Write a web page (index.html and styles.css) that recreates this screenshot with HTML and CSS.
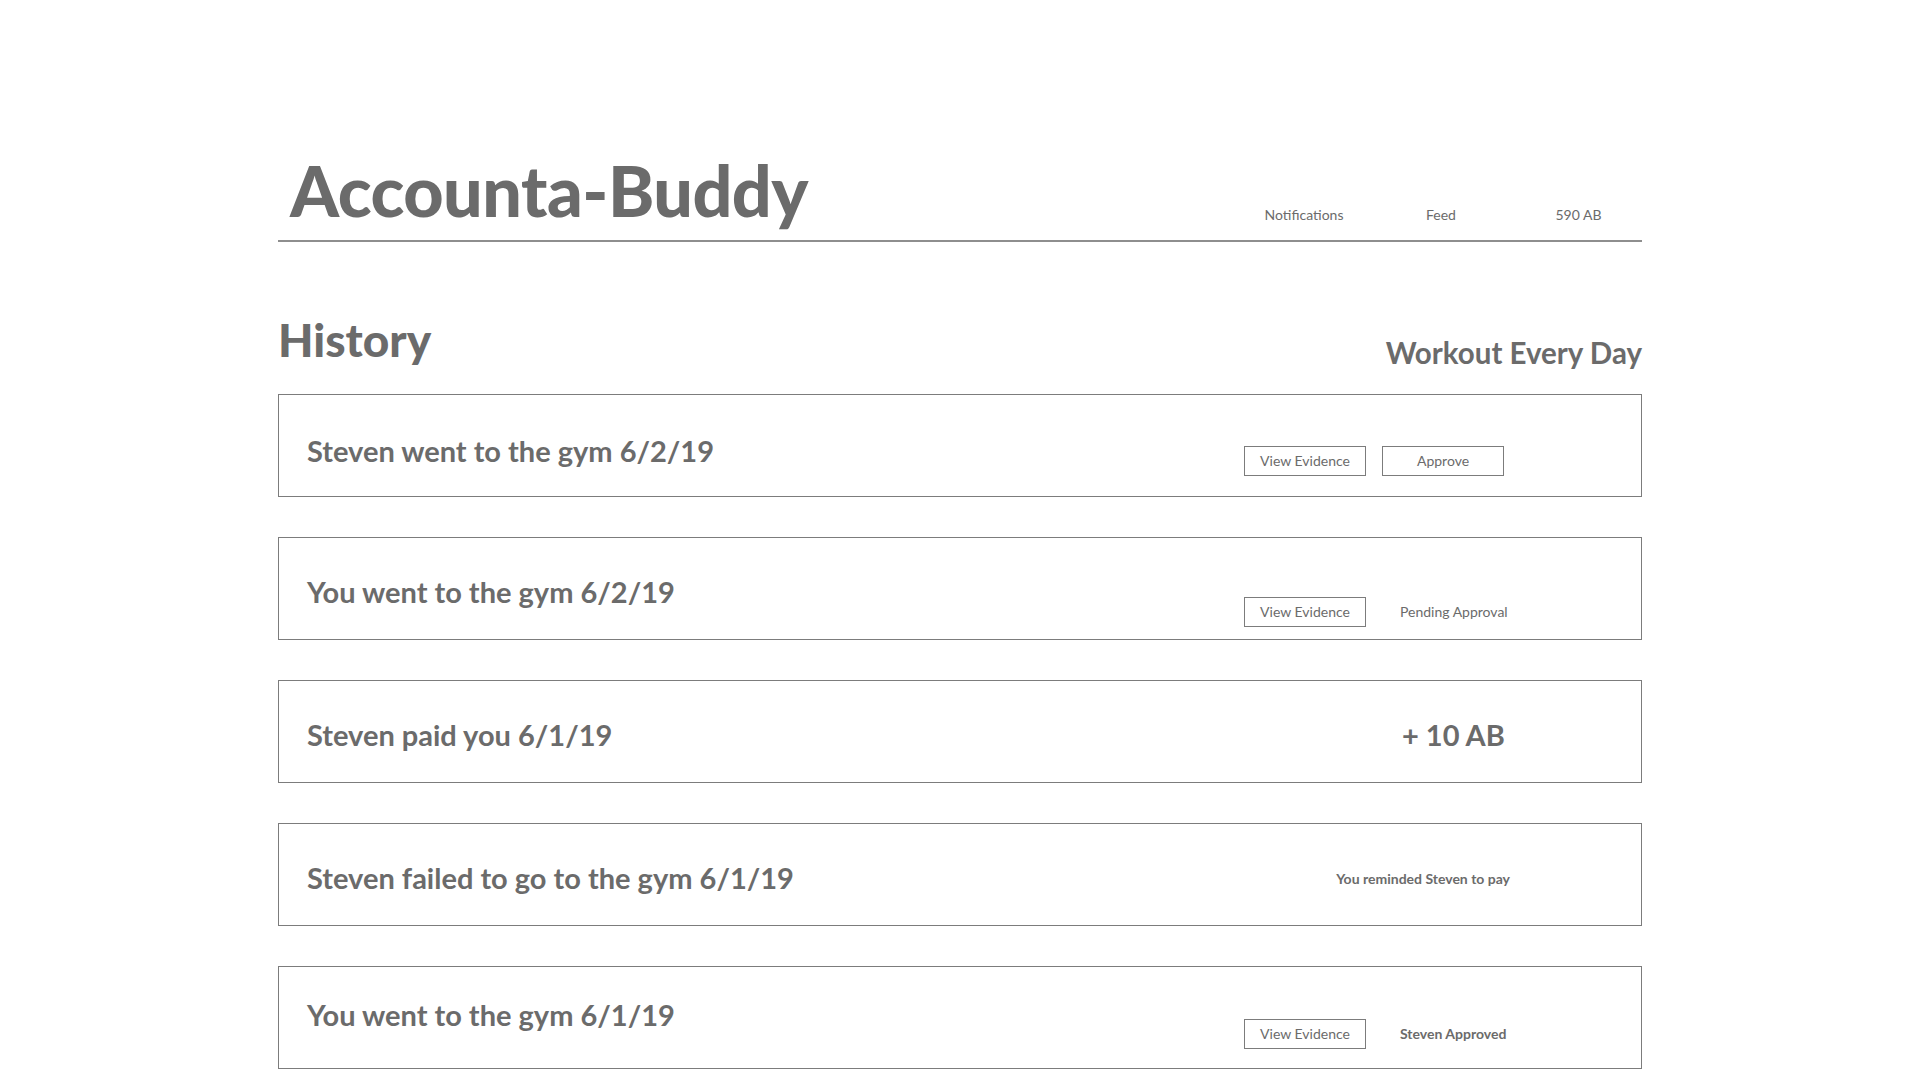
FILE: index.html
```html
<!DOCTYPE html>
<html lang="en">
<head>
<meta charset="utf-8">
<title>Accounta-Buddy – History</title>
<link rel="stylesheet" href="styles.css">
</head>
<body>
<div class="page">
  <header class="topbar">
    <h1 class="logo">Accounta-Buddy</h1>
    <nav class="nav">
      <a class="nav-item nav-notif">Notifications</a>
      <a class="nav-item nav-feed">Feed</a>
      <a class="nav-item nav-ab">590 AB</a>
    </nav>
  </header>

  <main>
    <div class="section-head">
      <h2 class="history">History</h2>
      <h3 class="goal">Workout Every Day</h3>
    </div>

    <ul class="cards">
      <li class="card card-1">
        <span class="title">Steven went to the gym 6/2/19</span>
        <div class="actions">
          <button class="btn">View Evidence</button>
          <button class="btn">Approve</button>
        </div>
      </li>
      <li class="card card-2">
        <span class="title">You went to the gym 6/2/19</span>
        <div class="actions">
          <button class="btn">View Evidence</button>
          <span class="status">Pending Approval</span>
        </div>
      </li>
      <li class="card card-3">
        <span class="title">Steven paid you 6/1/19</span>
        <div class="actions">
          <span class="amount">+ 10 AB</span>
        </div>
      </li>
      <li class="card card-4">
        <span class="title">Steven failed to go to the gym 6/1/19</span>
        <div class="actions">
          <span class="note">You reminded Steven to pay</span>
        </div>
      </li>
      <li class="card card-5">
        <span class="title">You went to the gym 6/1/19</span>
        <div class="actions">
          <button class="btn">View Evidence</button>
          <span class="status status-bold">Steven Approved</span>
        </div>
      </li>
    </ul>
  </main>
</div>
</body>
</html>
```

FILE: styles.css
```css
* {
  box-sizing: border-box;
}

html, body {
  margin: 0;
  padding: 0;
  background: #ffffff;
}

body {
  font-family: "Lato", "Open Sans", "Liberation Sans", sans-serif;
  color: #6b6b6b;
}

.page {
  width: 1364px;
  margin: 0 auto;
}

/* ---------- Top bar ---------- */
.topbar {
  display: flex;
  justify-content: space-between;
  align-items: flex-end;
  padding-top: 155px;
  padding-bottom: 15px;
  border-bottom: 2px solid #8e8e8e;
}

.logo {
  margin: 0;
  padding-left: 12px;
  font-size: 70px;
  line-height: 1;
  font-weight: 900;
  letter-spacing: -0.5px;
  color: #6b6b6b;
}

.nav {
  display: flex;
}

.nav-item {
  display: block;
  text-align: center;
  font-size: 14px;
  line-height: 20px;
  color: #6b6b6b;
}

.nav-notif { width: 126px; }
.nav-feed  { width: 148px; }
.nav-ab    { width: 127px; }

/* ---------- Section head ---------- */
.section-head {
  display: flex;
  justify-content: space-between;
  align-items: flex-start;
  margin-top: 75px;
}

.history {
  margin: 0;
  font-size: 46px;
  line-height: 1;
  font-weight: 900;
  color: #6b6b6b;
}

.goal {
  margin: 21px 0 0 0;
  font-size: 29.5px;
  line-height: 1;
  font-weight: 700;
  color: #6b6b6b;
}

/* ---------- Cards ---------- */
.cards {
  list-style: none;
  margin: 26px 0 0;
  padding: 0;
  display: flex;
  flex-direction: column;
  gap: 40px;
}

.card {
  height: 103px;
  border: 1px solid #7c7c7c;
  display: flex;
  align-items: flex-start;
}

.title {
  flex: 1;
  margin-top: 39px;
  padding-left: 28px;
  font-size: 29px;
  line-height: 1;
  font-weight: 700;
}

.actions {
  width: 266px;
  margin-right: 131px;
  display: flex;
  align-items: center;
  gap: 16px;
}

.btn {
  width: 122px;
  height: 30px;
  padding: 0;
  border: 1px solid #7c7c7c;
  background: #ffffff;
  font-family: inherit;
  font-size: 14px;
  line-height: 28px;
  color: #6b6b6b;
  text-align: center;
}

.status {
  margin-left: 18px;
  font-size: 14px;
  line-height: 20px;
}

.status-bold {
  font-weight: 700;
}

.amount {
  margin-left: 158px;
  font-size: 29px;
  line-height: 1;
  font-weight: 700;
}

.note {
  font-size: 14px;
  line-height: 20px;
  font-weight: 700;
}

/* per-row vertical placement */
.card-1 .title   { margin-top: 41px; }
.card-1 .actions { margin-top: 51px; }

.card-2 .actions { margin-top: 59px; }

.card-3 .actions { margin-top: 39px; }

.card-4 .actions { margin-top: 45px; justify-content: flex-end; }

.card-5 .title   { margin-top: 33px; }
.card-5 .actions { margin-top: 52px; }
```
